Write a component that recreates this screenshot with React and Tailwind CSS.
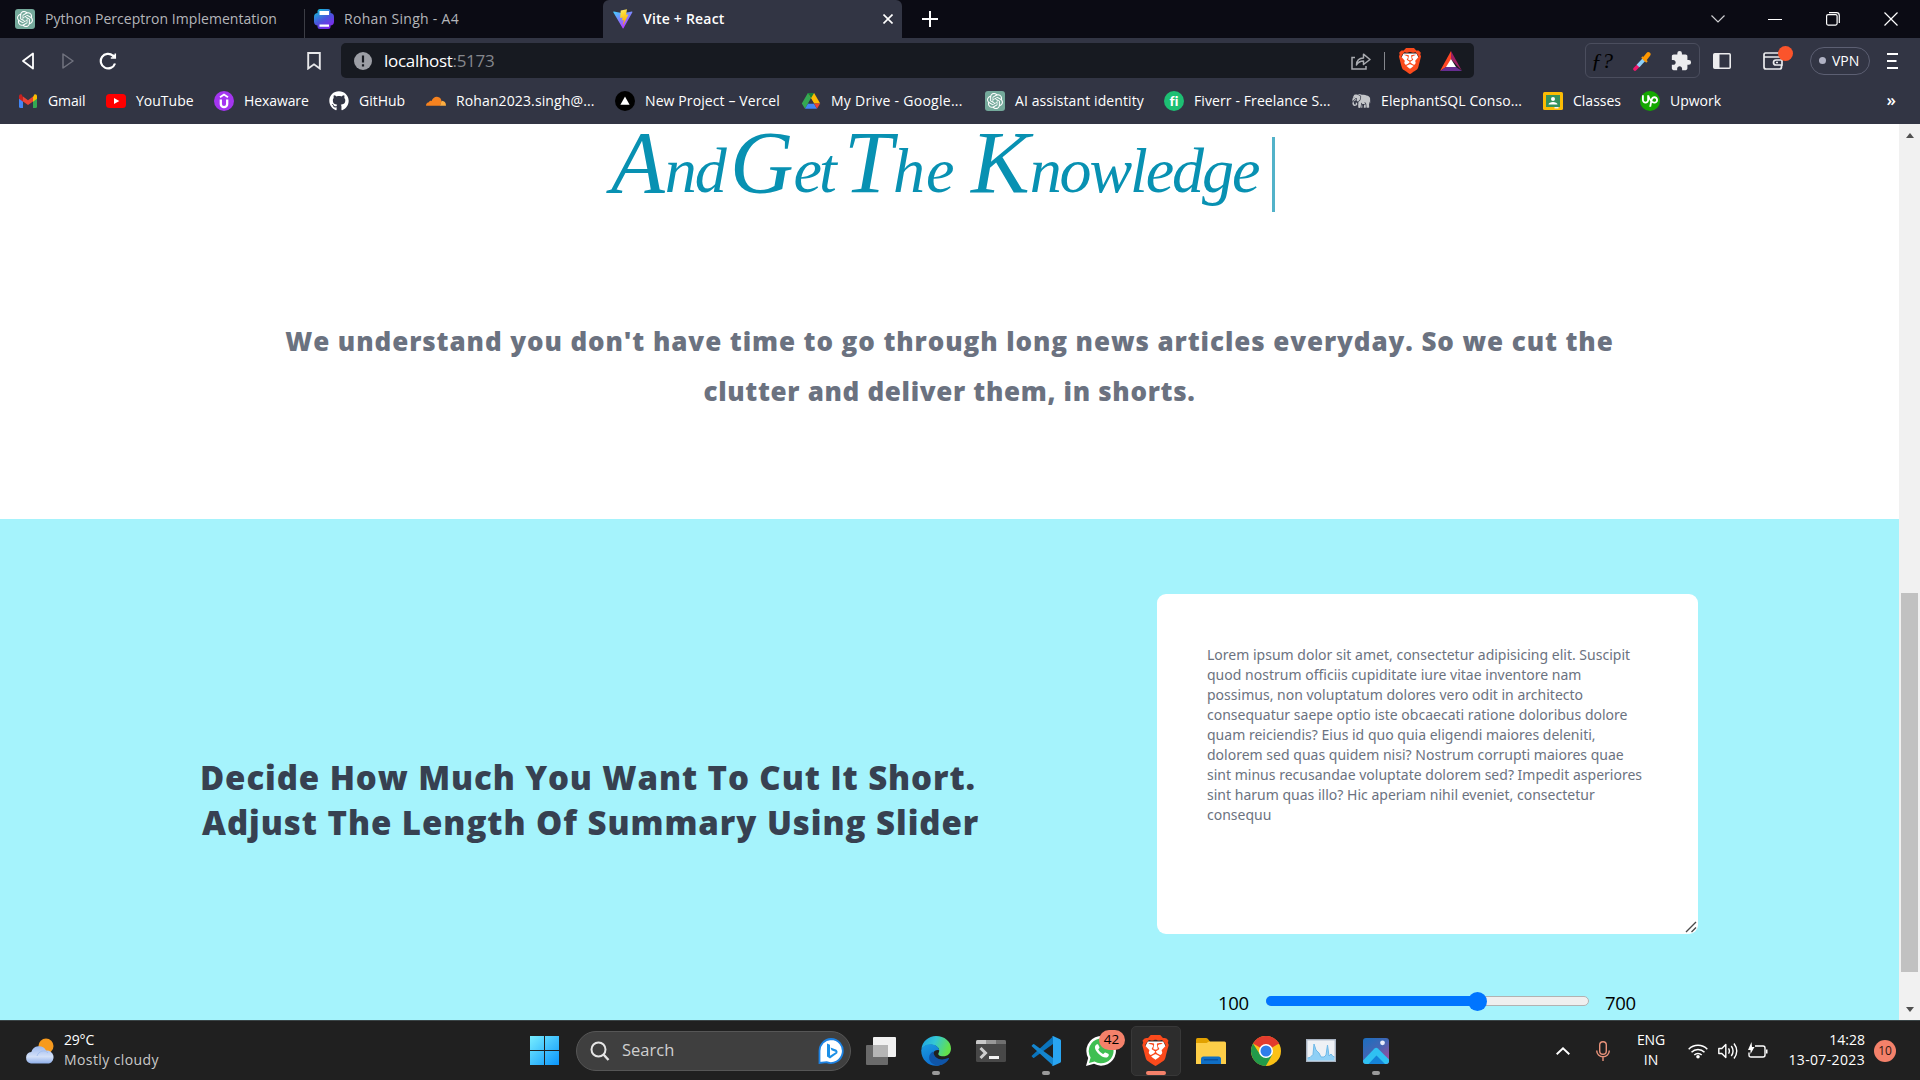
import React from "react";
import { SiOpenai, SiBrave, SiUpwork } from "react-icons/si";
import { FaGithub } from "react-icons/fa";
import { GiElephant } from "react-icons/gi";
import { MdExtension } from "react-icons/md";

const Gpt = () => (
  <span className="flex size-5 items-center justify-center rounded-[3px] bg-[#74a99b]">
    <SiOpenai className="size-4 text-white" />
  </span>
);

const Vite = () => (
  <svg viewBox="0 0 20 20" className="size-5">
    <defs>
      <linearGradient id="va" x1="0" y1="0" x2="0.6" y2="1">
        <stop offset="0" stopColor="#41d1ff" />
        <stop offset="1" stopColor="#bd34fe" />
      </linearGradient>
      <linearGradient id="vb" x1="0" y1="0" x2="0.2" y2="1">
        <stop offset="0" stopColor="#ffea83" />
        <stop offset="0.3" stopColor="#ffdd35" />
        <stop offset="1" stopColor="#ffa800" />
      </linearGradient>
    </defs>
    <path d="M19.4 3.2 10.5 19.2q-.4.6-.8 0L.3 3.2q-.2-.7.5-.6l9.2 1.6 8.9-1.6q.7 0 .5.6Z" fill="url(#va)" />
    <path d="M14.2.2 7.7 1.5l-.5 7q0 .4.4.4l2-.4-.6 3 2-.6-1 4.4q0 .6.4.1l5-10-2.3.3.8-4.9q.1-.5.3-.6Z" fill="url(#vb)" />
  </svg>
);

const Printer = () => (
  <svg viewBox="0 0 20 20" className="size-5">
    <defs>
      <linearGradient id="pr" gradientUnits="userSpaceOnUse" x1="2" y1="0" x2="14" y2="20">
        <stop offset="0" stopColor="#10c5d8" />
        <stop offset="0.55" stopColor="#4b52dd" />
        <stop offset="1" stopColor="#8126ec" />
      </linearGradient>
    </defs>
    <rect x="3.5" width="13" height="20" rx="2.5" fill="url(#pr)" />
    <rect y="4" width="20" height="12.5" rx="4" fill="url(#pr)" />
    <path d="M5.500 2h9.500v4H5.500z M5.500 15.500h9.500v2.200H5.500z" fill="#fff" />
  </svg>
);

const Gmail = () => (
  <svg viewBox="0 0 20 20" className="size-5">
    <path d="M1 5v10.500q0 1.500 1.500 1.500H5V7Z" fill="#4285f4" />
    <path d="M19 5v10.500q0 1.500-1.500 1.500H15V7Z" fill="#34a853" />
    <path d="M5 5.500v5L10 14l5-3.500v-5L10 9.200Z" fill="#ea4335" />
    <path d="M1 5.300v2.500l4 3V6L3.800 3.700C2.500 2.800 1 3.800 1 5.300Z" fill="#c5221f" />
    <path d="M19 5.300v2.500l-4 3V6l1.200-2.300c1.300-.9 2.800.1 2.800 1.600Z" fill="#fbbc04" />
  </svg>
);

const YouTube = () => (
  <svg viewBox="0 0 20 20" className="size-5">
    <rect y="3" width="20" height="14" rx="3.500" fill="#f00" />
    <path d="m8 7 5.300 3L8 13Z" fill="#fff" />
  </svg>
);

const Hexaware = () => (
  <svg viewBox="0 0 20 20" className="size-5">
    <circle cx="10" cy="10" r="10" fill="#a435f0" />
    <path d="M6.800 8.500V13a3.200 3.200 0 0 0 6.400 0V8.500" fill="none" stroke="#fff" strokeWidth="2.300" />
    <path d="m6 6.200 4-2.700 4 2.700" fill="none" stroke="#fff" strokeWidth="1.800" />
  </svg>
);

const Cloudflare = () => (
  <svg viewBox="0 0 20 20" className="size-5">
    <path d="M0 14.500c0-2 1.500-3.300 3-3.200.2-1.300 1.600-1.800 2.600-1.200C6.500 7.500 8.700 5.600 11 5.800c2.700.2 4.300 2 4.500 4.300l-1.300 4.600H.2Z" fill="#f6821f" />
    <path d="M14 14.700c1-2.500 1-4.600 2-4.900 2.300.1 4 2 4 4.600l-.2.300Z" fill="#fbad41" />
  </svg>
);

const Vercel = () => (
  <svg viewBox="0 0 20 20" className="size-5">
    <circle cx="10" cy="10" r="10" fill="#000" />
    <path d="m10 5.500 4.600 8.200H5.400Z" fill="#fff" />
  </svg>
);

const Drive = () => (
  <svg viewBox="0 0 20 20" className="size-5">
    <path d="M6.900 2h6.200L10 7.300 7.200 12.300l-3.200 5.500L.8 12.500Z" fill="#34a853" />
    <path d="M13.100 2 19.200 12.500H13L7.900 3.700Z" fill="#fbbc04" />
    <path d="M6.900 2 10 7.300 13.100 2Z" fill="#188038" />
    <path d="M7.100 12.500h5.800l3.100 5.300H4Z" fill="#4285f4" />
    <path d="M13 12.500h6.200L16 17.800Z" fill="#ea4335" />
    <path d="M10 7.500 7.200 12.500h5.700Z" fill="#323544" />
  </svg>
);

const Fiverr = () => (
  <span className="flex size-5 items-center justify-center rounded-full bg-[#1dbf73] pb-px font-['Lato'] text-[14px] leading-none font-black text-white">
    fi
  </span>
);

const Classes = () => (
  <svg viewBox="0 0 20 20" className="size-5">
    <rect y="1" width="20" height="18" rx="1.500" fill="#fbbc04" />
    <rect x="3" y="4" width="14" height="12" fill="#34915c" />
    <circle cx="10" cy="8" r="2" fill="#fff" />
    <path d="M5.500 13.500c0-3.500 9-3.500 9 0Z" fill="#fff" />
    <path d="M11.500 16h4v1.500h-4z" fill="#f1f1f1" />
  </svg>
);

const Upwork = () => (
  <span className="flex size-5 items-center justify-center rounded-full bg-[#14a800]">
    <SiUpwork className="size-4 text-white" />
  </span>
);

const BraveLion = ({ className }) => (
  <svg viewBox="0 0 24 24" className={className}>
    <path d="M6 5h12l2 4-2 8-6 5-6-5-2-8Z" fill="#fff" />
    <SiBrave size={24} color="#fb4a1c" />
  </svg>
);

const bookmarks = [
  { label: "Gmail", icon: <Gmail />, w: "w-[88px] tracking-[-0.1px]" },
  { label: "YouTube", icon: <YouTube />, w: "w-[108px]" },
  { label: "Hexaware", icon: <Hexaware />, w: "w-[115px] tracking-[-0.1px]" },
  { label: "GitHub", icon: <FaGithub className="size-5 text-white" />, w: "w-[97px]" },
  { label: "Rohan2023.singh@...", icon: <Cloudflare />, w: "w-[189px] tracking-[0.12px]" },
  { label: "New Project – Vercel", icon: <Vercel />, w: "w-[186px] tracking-[0.1px]" },
  { label: "My Drive - Google...", icon: <Drive />, w: "w-[184px] tracking-[0.27px]" },
  { label: "AI assistant identity", icon: <Gpt />, w: "w-[179px] tracking-[0.1px]" },
  { label: "Fiverr - Freelance S...", icon: <Fiverr />, w: "w-[187px] tracking-[0.1px]" },
  { label: "ElephantSQL Conso...", icon: <GiElephant className="size-5 -scale-x-100 text-[#c4c6ca]" />, w: "w-[192px] tracking-[0.1px]" },
  { label: "Classes", icon: <Classes />, w: "w-[97px]" },
  { label: "Upwork", icon: <Upwork />, w: "w-[97px]" },
];

function TabStrip() {
  return (
    <div className="flex h-[38px] bg-[#0b0b14] text-[14px] text-[#b4b5ba]">
      <div className="flex w-[304px] items-center pl-[15px]">
        <Gpt />
        <span className="-mt-[2px] ml-[10px] tracking-[0.04px]">Python Perceptron Implementation</span>
      </div>
      <div className="mt-[9px] h-[29px] w-px bg-[#3c3d45]" />
      <div className="flex w-[298px] items-center pl-[9px]">
        <Printer />
        <span className="-mt-[2px] ml-[10px] tracking-[0.3px]">Rohan Singh - A4</span>
      </div>
      <div className="flex w-[299px] items-center rounded-t-[6px] bg-[#323544] pl-[10px] font-semibold text-white">
        <Vite />
        <span className="-mt-[2px] ml-[10px] tracking-[0.2px]">Vite + React</span>
        <svg viewBox="0 0 10 10" className="mr-[9px] ml-auto size-[10px]" stroke="#fff" strokeWidth="1.600">
          <path d="m.5.500 9 9m0-9-9 9" />
        </svg>
      </div>
      <svg viewBox="0 0 16 16" className="mt-[11px] ml-5 size-4" stroke="#fff" strokeWidth="2">
        <path d="M8 0v16M0 8h16" />
      </svg>
      <div className="mr-[22px] ml-auto flex items-center">
        <svg viewBox="0 0 14 8" className="mr-[43px] h-2 w-[14px]" fill="none" stroke="#cfcfd2" strokeWidth="1.200">
          <path d="m.5.500 6.500 6.500 6.500-6.500" />
        </svg>
        <div className="mr-[44px] h-px w-[14px] bg-white" />
        <svg viewBox="0 0 14 14" className="mr-[44px] size-[14px]" fill="none" stroke="#fff" strokeWidth="1.200">
          <rect x=".6" y="2.600" width="10.500" height="10.500" rx="1.500" />
          <path d="M3 .7h7.500q2.800 0 2.800 2.800V11" />
        </svg>
        <svg viewBox="0 0 14 14" className="size-[14px]" stroke="#fff" strokeWidth="1.200">
          <path d="m.5.500 13 13m0-13-13 13" />
        </svg>
      </div>
    </div>
  );
}

function Toolbar() {
  return (
    <div className="flex h-[45px] items-center">
      <svg viewBox="0 0 12 18" className="ml-[22px] h-[18px] w-3" fill="none" stroke="#fff" strokeWidth="1.800" strokeLinejoin="round">
        <path d="M11 1.500v15L1 9Z" />
      </svg>
      <svg viewBox="0 0 12 18" className="ml-[28px] h-[18px] w-3" fill="none" stroke="#71737f" strokeWidth="1.500" strokeLinejoin="round">
        <path d="M1 2v14l10-7Z" />
      </svg>
      <svg viewBox="0 0 18 18" className="ml-[25px] size-[18px]" fill="none" stroke="#fff" strokeWidth="2.200">
        <path d="M16 11.500A7.300 7.300 0 1 1 14 3.700" />
        <circle cx="14.800" cy="4.300" r="1.700" fill="#fff" stroke="none" />
        <path d="M16.300 1.500V6h-4.500" strokeWidth="1.500" />
      </svg>
      <svg viewBox="0 0 14 18" className="ml-[190px] h-[18px] w-[14px]" fill="none" stroke="#e8e8ea" strokeWidth="1.900">
        <path d="M1.200 1h11.600v15.500L7 12.300 1.200 16.500Z" />
      </svg>
      <div className="ml-[20px] flex h-[35px] w-[1133px] items-center rounded-[5px] bg-[#171a21]">
        <svg viewBox="0 0 18 18" className="ml-[13px] size-[18px]">
          <circle cx="9" cy="9" r="9" fill="#9c9ea5" />
          <path d="M9 3.500v7M9 12.200v2.200" stroke="#171a21" strokeWidth="2.200" />
        </svg>
        <span className="ml-[12px] text-[17px] tracking-[-0.3px] text-white">
          localhost<span className="text-[#85878d]">:5173</span>
        </span>
        <svg viewBox="0 0 20 18" className="ml-auto h-[18px] w-5" fill="none" stroke="#a9abb0" strokeWidth="1.500">
          <path d="M4 5.500H1V17h14v-3" />
          <path d="M5.500 13c.2-4.500 3-7 7-7V2.200L19 7.500l-6.500 5V9c-3.300 0-5.500 1.200-7 4Z" strokeLinejoin="round" />
        </svg>
        <div className="ml-[13px] h-[18px] w-px bg-[#85878d]" />
        <BraveLion className="ml-[12px] size-[26px]" />
        <svg viewBox="0 0 22 20" className="mr-[12px] ml-[17px] h-5 w-[22px]">
          <path d="M11 0 0 20l11-7Z" fill="#ff4724" />
          <path d="M11 0v8l11 12Z" fill="#9e1f63" />
          <path d="M0 20h22l-6-4H6Z" fill="#662d91" />
          <path d="m11 8-5 8h10Z" fill="#fff" />
        </svg>
      </div>
      <div className="ml-[111px] flex h-[35px] w-[115px] items-center rounded-[6px] border border-[#4b4e5e]">
        <span className="ml-[5px] w-[24px] font-['Liberation_Serif'] text-[22px] leading-none text-black italic">ƒ?</span>
        <svg viewBox="0 0 18 20" className="ml-[18px] h-5 w-[18px]">
          <path d="m2 18 4-4" stroke="#f0186c" strokeWidth="3.600" strokeLinecap="round" />
          <path d="m5 15 6-6.500" stroke="#8ed0f8" strokeWidth="3.800" />
          <path d="m9 6 5 5" stroke="#f59a12" strokeWidth="2.200" />
          <path d="m12 7.500 3.300-4.200" stroke="#ff9800" strokeWidth="4.500" strokeLinecap="round" />
        </svg>
        <MdExtension className="ml-[19px] size-[22px] text-[#ececee]" />
      </div>
      <svg viewBox="0 0 18 16" className="ml-[13px] h-4 w-[18px]">
        <rect x=".8" y=".8" width="16.400" height="14.400" rx="1" fill="none" stroke="#ececee" strokeWidth="1.600" />
        <path d="M1 1h5.500v14H1z" fill="#ececee" />
      </svg>
      <div className="relative ml-[32px]">
        <svg viewBox="0 0 20 18" className="h-[18px] w-5" fill="none" stroke="#ececee" strokeWidth="1.700">
          <path d="M18.500 6V3Q18.500 1 16.500 1h-14Q1 1 1 3v12q0 2 2 2h13.500q2 0 2-2v-2M1 5h17" />
          <path d="M19 8h-6q-2.500 0-2.500 2.500T13 13h6Z" />
          <path d="M13 10.500h2" />
        </svg>
        <span className="absolute -top-[6px] left-[15px] size-[15px] rounded-full bg-[#fb542b]" />
      </div>
      <div className="ml-[27px] flex h-7 w-[60px] items-center rounded-full border border-[#5c5f72] text-[14px] text-white">
        <span className="mr-[6px] ml-[8px] size-[7px] rounded-full bg-[#b0b2c4]" />
        VPN
      </div>
      <svg viewBox="0 0 12 18" className="ml-[16px] h-[18px] w-3" stroke="#fff" strokeWidth="1.800">
        <path d="M1 2h11M1 9h9.500M1 16h11" />
      </svg>
    </div>
  );
}

function Bookmarks() {
  return (
    <div className="flex h-[41px] items-center pb-[5px] pl-[18px] text-[14px] text-white">
      {bookmarks.map((b) => (
        <div key={b.label} className={`flex shrink-0 items-center gap-[10px] whitespace-nowrap ${b.w}`}>
          {b.icon}
          <span className="-mt-px">{b.label}</span>
        </div>
      ))}
      <span className="mr-[24px] -mt-[3px] ml-auto text-[17px] leading-none font-semibold">»</span>
    </div>
  );
}

const lorem = [
  "Lorem ipsum dolor sit amet, consectetur adipisicing elit. Suscipit",
  "quod nostrum officiis cupiditate iure vitae inventore nam",
  "possimus, non voluptatum dolores vero odit in architecto",
  "consequatur saepe optio iste obcaecati ratione doloribus dolore",
  "quam reiciendis? Eius id quo quia eligendi maiores deleniti,",
  "dolorem sed quas quidem nisi? Nostrum corrupti maiores quae",
  "sint minus recusandae voluptate dolorem sed? Impedit asperiores",
  "sint harum quas illo? Hic aperiam nihil eveniet, consectetur",
  "consequu",
];

function Page() {
  return (
    <div className="flex h-[896px] bg-white">
      <main className="w-[1899px] whitespace-nowrap">
        <section className="h-[395px]">
          <h1 className="flex h-[88px] pl-[611px] font-['Liberation_Serif'] text-[88px] leading-[78px] text-[#0891b2] italic">
            <span className="w-[119px]">A<span className="text-[64px] tracking-[-2px]">nd</span></span>
            <span className="w-[114px]">G<span className="text-[64px] tracking-[-3px]">et</span></span>
            <span className="w-[127px]">T<span className="text-[64px] tracking-[1px]">he</span></span>
            <span className="w-[301px]">K<span className="text-[64px] tracking-[-2.100px]">nowledge</span></span>
            <span className="mt-[13px] h-[75px] w-[3px] bg-[#52b2c9]" />
          </h1>
          <p className="mt-[104px] text-center text-[26px] leading-[50px] font-extrabold text-[#6b7280]">
            <span className="block tracking-[0.910px]">
              We understand you don't have time to go through long news articles everyday. So we cut the
            </span>
            <span className="block tracking-[0.670px]">clutter and deliver them, in shorts.</span>
          </p>
        </section>
        <section className="flex h-[501px] bg-[#a5f3fc]">
          <h2 className="w-[1157px] pt-[236px] pl-[200px] text-[33px] leading-[45px] font-extrabold text-[#374151]">
            <span className="block tracking-[0.900px]">Decide How Much You Want To Cut It Short.</span>
            <span className="block pl-[2px] tracking-[0.950px]">Adjust The Length Of Summary Using Slider</span>
          </h2>
          <div className="w-[541px] pt-[75px]">
            <div className="relative h-[340px] rounded-[9px] bg-white pt-[51px] pl-[50px] font-['Noto_Sans'] text-[14px] leading-5 tracking-[0.010px] text-[#6b7280]">
              {lorem.map((l) => (
                <div key={l}>{l}</div>
              ))}
              <svg viewBox="0 0 12 12" className="absolute right-[1px] bottom-[1px] size-3" stroke="#4a4a4a" strokeWidth="1.400">
                <path d="m1 11 10-10M6.500 11 11 6.500" />
              </svg>
            </div>
            <div className="flex h-[60px] items-start pt-[57px] pl-[61px] text-[18.500px] leading-5 text-black">
              <span className="w-[48px] pt-[2px] tracking-[-0.3px]">100</span>
              <div className="flex h-5 w-[323px] items-center">
                <div className="relative flex h-[10px] w-full items-center rounded-full border border-[#b2b2b2] bg-[#efefef]">
                  <div className="-ml-px h-[10px] w-[212px] rounded-full bg-[#0075ff]" />
                  <span className="absolute left-[201px] size-[19px] rounded-full bg-[#0075ff]" />
                </div>
              </div>
              <span className="ml-[16px] pt-[2px] tracking-[-0.3px]">700</span>
            </div>
          </div>
        </section>
      </main>
      <div className="flex w-[21px] flex-col items-center bg-[#f1f1f1]">
        <div className="mt-[9px] size-0 border-x-[4.500px] border-b-[5px] border-x-transparent border-b-[#505050]" />
        <div className="mt-[455px] h-[379px] w-[17px] bg-[#c1c1c1]" />
        <div className="mt-[35px] size-0 border-x-[4.500px] border-t-[5px] border-x-transparent border-t-[#505050]" />
      </div>
    </div>
  );
}

const Weather = () => (
  <svg viewBox="0 0 30 26" className="h-[26px] w-[30px]">
    <defs>
      <linearGradient id="cl" x1="0" y1="0" x2="0" y2="1">
        <stop offset="0" stopColor="#9db9ee" />
        <stop offset="0.6" stopColor="#d3e0f8" />
        <stop offset="1" stopColor="#8fafea" />
      </linearGradient>
    </defs>
    <circle cx="21" cy="8" r="7.500" fill="#f79a1e" />
    <path d="M6 25.500a5.800 5.800 0 0 1 .3-11.500A8 8 0 0 1 21 12.500a6.700 6.700 0 0 1 3 13Z" fill="url(#cl)" />
    <path d="M12 18c1.500-5 8-7 11-3" fill="none" stroke="#a5bff0" />
  </svg>
);

const Windows = () => (
  <svg viewBox="0 0 29 29" className="size-[29px]">
    <defs>
      <linearGradient id="wn" gradientUnits="userSpaceOnUse" x1="0" y1="0" x2="29" y2="29">
        <stop offset="0" stopColor="#78eeff" />
        <stop offset="1" stopColor="#0a95fb" />
      </linearGradient>
    </defs>
    <path d="M0 0h14v14H0zM15 0h14v14H15zM0 15h14v14H0zM15 15h14v14H15z" fill="url(#wn)" />
  </svg>
);

const Bing = () => (
  <svg viewBox="0 0 26 26" className="size-[26px]">
    <path d="M13 1a12 12 0 1 1-4.500 23.200L1.500 25V13A12 12 0 0 1 13 1Z" fill="#fff" stroke="#1d82e2" strokeWidth="1.800" />
    <path d="M9 5.500 12 6.800v11L18 14l-4.500-1.800-1-2.700 6 2.200q1.700 1 .8 3.600L12 20.500l-3-2Z" fill="#1b8fe6" />
  </svg>
);

const TaskView = () => (
  <svg viewBox="0 0 30 28" className="h-7 w-[30px]">
    <rect y="8" width="22" height="20" rx="1" fill="#6a6a6a" />
    <rect x="7" width="23" height="20" rx="1" fill="#f1f1f1" />
    <path d="M7 8h15v12H7z" fill="#b5b5b5" />
  </svg>
);

const Edge = () => (
  <svg viewBox="0 0 30 30" className="size-[30px]">
    <defs>
      <linearGradient id="e1" x1="0" y1="0" x2="1" y2="0.3">
        <stop offset="0" stopColor="#1a9fe8" />
        <stop offset="0.5" stopColor="#35c8d4" />
        <stop offset="1" stopColor="#62e04c" />
      </linearGradient>
      <linearGradient id="e2" x1="0" y1="0" x2="0.4" y2="1">
        <stop offset="0" stopColor="#1b9de2" />
        <stop offset="1" stopColor="#0d6fd0" />
      </linearGradient>
    </defs>
    <path d="M.4 13C1.200 5.500 7.500 0 15 0c8.500 0 15 5.500 15 12.500 0 5-3.500 7.800-7.800 7.800-4 0-5.500-1.500-4.700-3 2.500-4-1.500-8.500-7-8.500-4.500 0-8 1.500-10.100 4.200Z" fill="url(#e1)" />
    <path d="M.2 14C2 9.500 6 8.300 9.500 8.300c5 0 8.500 3 8.700 6-4-1.500-6.500 1.500-6.200 5 .4 5 5 9 10 8.700C12.500 33 0 27 .2 14Z" fill="url(#e2)" />
    <path d="M12.300 15.500C8.500 17 7 21.500 9 25c2.500 4.500 9 5.500 13 3.300 2.500-1.200 4.700-3.300 6-5.600.3-.6-.2-1-.8-.7-6.500 3-14 1.500-14.900-6.500Z" fill="#0f55a8" />
  </svg>
);

const Terminal = () => (
  <svg viewBox="0 0 30 22" className="h-[22px] w-[30px]">
    <rect width="30" height="22" rx="1.500" fill="#484848" />
    <path d="M0 4V1.500Q0 0 1.500 0H10v4z" fill="#c9c9c9" />
    <path d="M10 0h10v4H10z" fill="#989898" />
    <path d="M20 0h8.500Q30 0 30 1.500V4H20z" fill="#707070" />
    <path d="m4.500 8 5 5-5 5" fill="none" stroke="#cfcfcf" strokeWidth="3" />
    <path d="M13 16h10v3H13z" fill="#f3f3f3" />
  </svg>
);

const Code = () => (
  <svg viewBox="0 0 30 30" className="size-[30px]">
    <path d="m1 19.500 21-19V8L3.200 21.700q-.6.400-1.100 0L.8 20.500q-.4-.5.200-1Z" fill="#0a74bd" />
    <path d="M1 10.500 22 29.500V22L3.200 8.300q-.6-.4-1.100 0L.8 9.500q-.4.500.2 1Z" fill="#1486cf" />
    <path d="M21.500.2Q22 0 22.500.2l6.600 3Q30 3.700 30 4.700v20.600q0 1-.9 1.500l-6.600 3q-1 .4-1.700-.4Q22 30 22 28V2Q22 0 20.800.6Z" fill="#29a5f2" />
  </svg>
);

const WhatsApp = () => (
  <span className="relative">
    <svg viewBox="0 0 30 30" className="size-[30px]">
      <path d="M0 30 2.200 22A14.800 14.800 0 1 1 8 27.800Z" fill="#fff" />
      <path d="M3 27 4.600 21.500A12.400 12.400 0 1 1 8.600 25.500Z" fill="#3fbf52" />
      <path d="M10.500 8.500c-2.500 1.500-2 5 1.500 8.700 3.700 4 8 5.500 10 3.500 1.200-1.200 1-2.400.2-2.900l-2.800-1.400c-1.200-.2-1.500 1.700-2.400 1.500-2-.7-4-2.700-4.700-4.300-.1-.8 1.500-1.300 1.200-2.400l-1.200-2.500c-.4-.7-1.200-.5-1.800-.2Z" fill="#fff" />
    </svg>
    <span className="absolute -top-[6px] left-[13px] flex h-5 w-[26px] items-center justify-center rounded-full bg-[#f4816a] text-[13.500px] text-black">
      42
    </span>
  </span>
);

const Folder = () => (
  <svg viewBox="0 0 30 26" className="h-[26px] w-[30px]">
    <path d="M0 1.500Q0 0 1.500 0H10q1 0 1.700.8L14 3.500V10H0Z" fill="#e2a100" />
    <path d="M0 5h10.500L13 3.500h15.500q1.500 0 1.500 1.500v21H0Z" fill="#fdce48" />
    <path d="M5 26v-5q0-2.500 2.500-2.500h15Q25 18.500 25 21v5Z" fill="#0f6fc6" />
    <path d="M8 21.800h14" stroke="#0a4b94" strokeWidth="1.200" />
  </svg>
);

const Chrome = () => (
  <svg viewBox="0 0 30 30" className="size-[30px]">
    <circle cx="15" cy="15" r="15" fill="#fbc116" />
    <path d="M15 15 2 7.500A15 15 0 0 1 28 7.500Z" fill="#e33b2e" />
    <path d="M15 8h13.200L27 6Z" fill="#e33b2e" />
    <path d="M2 7.500A15 15 0 0 0 14.800 30l6.500-11.400L9 18.600Z" fill="#229a4a" />
    <circle cx="15" cy="15" r="7" fill="#fff" />
    <circle cx="15" cy="15" r="5.500" fill="#2f7de9" />
  </svg>
);

const Monitor = () => (
  <svg viewBox="0 0 30 23" className="h-[23px] w-[30px]">
    <rect x=".7" y=".7" width="28.600" height="21.600" fill="#eef1f5" stroke="#a9b4c2" strokeWidth="1.400" />
    <path d="M1.500 21.500V19L4 18.500l3-3L8 5l2 6 3 3 2 4h3l2-2 1.500-10L23 17l2-2 1.500 2 2 1v3.500Z" fill="#8fd0f6" />
    <path d="M1.500 19 4 18.500l3-3L8 5l2 6 3 3 2 4h3l2-2 1.500-10L23 17l2-2 1.500 2 2 1" fill="none" stroke="#6fb9e8" />
  </svg>
);

const Photos = () => (
  <svg viewBox="0 0 26 26" className="size-[26px]">
    <defs>
      <linearGradient id="ph" x1="0" y1="0" x2="0.8" y2="1">
        <stop offset="0" stopColor="#1a6fc0" />
        <stop offset="0.5" stopColor="#4166b4" />
        <stop offset="1" stopColor="#a04a9a" />
      </linearGradient>
    </defs>
    <rect width="26" height="26" rx="3" fill="url(#ph)" />
    <path d="M0 22.500 11.500 10.500q1.700-1.500 3.400 0L26 21.500v1.500q0 3-3 3H3q-3 0-3-3Z" fill="#2fc1f2" />
    <path d="m5.500 26 8-8.500L22 26Z" fill="#1583d8" />
    <circle cx="19.500" cy="4.800" r="2.400" fill="#e9ecfa" />
  </svg>
);

const apps = [
  { name: "view", icon: <TaskView /> },
  { name: "edge", icon: <Edge />, mark: "dot" },
  { name: "terminal", icon: <Terminal /> },
  { name: "code", icon: <Code />, mark: "dot" },
  { name: "whatsapp", icon: <WhatsApp /> },
  { name: "brave", icon: <BraveLion className="size-[31px]" />, mark: "active" },
  { name: "folder", icon: <Folder /> },
  { name: "chrome", icon: <Chrome /> },
  { name: "monitor", icon: <Monitor /> },
  { name: "photos", icon: <Photos />, mark: "dot" },
];

function Taskbar() {
  return (
    <div className="flex h-[60px] items-center border-t border-[#3a4446] bg-[#202020] text-[14px] text-white">
      <div className="flex w-[530px] items-center pl-[25px]">
        <Weather />
        <div className="-mt-[2px] ml-[9px] leading-5">
          <div className="tracking-[-0.2px]">29°C</div>
          <div className="tracking-[0.4px] text-[#c9c9c9]">Mostly cloudy</div>
        </div>
      </div>
      <Windows />
      <div className="ml-[17px] flex h-10 w-[275px] items-center rounded-full border border-[#565656] bg-[#3f3f3f]">
        <svg viewBox="0 0 20 20" className="ml-[13px] size-5" fill="none" stroke="#e6e6e6" strokeWidth="2">
          <circle cx="8.500" cy="8.500" r="7" />
          <path d="m13.500 13.500 5 5.500" strokeWidth="2.400" />
        </svg>
        <span className="ml-[12px] text-[16.500px] text-[#cfcfcf]">Search</span>
        <span className="mr-[6px] ml-auto"><Bing /></span>
      </div>
      <div className="ml-[2px] flex">
        {apps.map((a) => (
          <div key={a.name} className="flex w-[55px] justify-center">
            <div
              className={
                a.mark === "active"
                  ? "relative flex size-[50px] items-center justify-center rounded-[5px] border border-[#383838] bg-[#2d2d2d]"
                  : "relative flex size-[50px] items-center justify-center"
              }
            >
              {a.icon}
              {a.mark === "dot" && <span className="absolute bottom-px h-1 w-2 rounded-full bg-[#9a9a9a]" />}
              {a.mark === "active" && <span className="absolute bottom-0 h-1 w-5 rounded-full bg-[#f4816a]" />}
            </div>
          </div>
        ))}
      </div>
      <div className="mr-[24px] ml-auto flex items-center">
        <svg viewBox="0 0 14 8" className="h-2 w-[14px]" fill="none" stroke="#fff" strokeWidth="1.900">
          <path d="m.7 7.300 6.300-6 6.300 6" />
        </svg>
        <svg viewBox="0 0 14 20" className="ml-[26px] h-5 w-[14px]" fill="none" stroke="#e8927a" strokeWidth="1.400">
          <rect x="3.700" y=".7" width="6.600" height="12.500" rx="3.300" />
          <path d="M.7 9.500a6.300 6.300 0 0 0 12.600 0M7 16v4" />
        </svg>
        <div className="-mt-px ml-[26px] w-[30px] text-center leading-5 tracking-[-0.1px]">
          <div>ENG</div>
          <div>IN</div>
        </div>
        <svg viewBox="0 0 20 16" className="ml-[22px] h-4 w-5" fill="none" stroke="#fff" strokeWidth="1.500">
          <path d="M.7 6.200a13 13 0 0 1 18.600 0M3.500 9.200a9 9 0 0 1 13 0M6.300 12a5.300 5.300 0 0 1 7.400 0" />
          <circle cx="10" cy="13.800" r="1.800" fill="#fff" stroke="none" />
        </svg>
        <svg viewBox="0 0 20 18" className="ml-[10px] h-[18px] w-5" fill="none" stroke="#fff" strokeWidth="1.400">
          <path d="M.8 6.500h3l4-4v13l-4-4h-3ZM10.500 6.300q1.800 2.700 0 5.400M13.300 4q3.500 5 0 10M16 1.500q5.500 7.500 0 15" strokeLinejoin="round" />
        </svg>
        <svg viewBox="0 0 20 17" className="ml-[10px] h-[17px] w-5" fill="none" stroke="#fff" strokeWidth="1.400">
          <path d="M7 4h8q2 0 2 2v7q0 2-2 2H3q-2 0-2-2v-2.500" />
          <path d="M18 7.500h1.500v4H18z" fill="#fff" stroke="none" />
          <path d="M3.500 0 0 8h2.500v4L6.500 5H4Z" fill="#fff" stroke="none" />
        </svg>
        <div className="-mt-[2px] ml-[20px] w-[77px] text-right leading-5">
          <div>14:28</div>
          <div className="tracking-[0.35px]">13-07-2023</div>
        </div>
        <div className="ml-[9px] flex size-[22px] items-center justify-center rounded-full bg-[#f4816a] text-[12px] text-[#301510]">
          10
        </div>
      </div>
    </div>
  );
}

export default function App() {
  return (
    <div className="h-[1080px] w-[1920px] overflow-hidden font-['Open_Sans',sans-serif]">
      <div className="bg-[#323544] whitespace-nowrap">
        <TabStrip />
        <Toolbar />
        <Bookmarks />
      </div>
      <Page />
      <Taskbar />
    </div>
  );
}
